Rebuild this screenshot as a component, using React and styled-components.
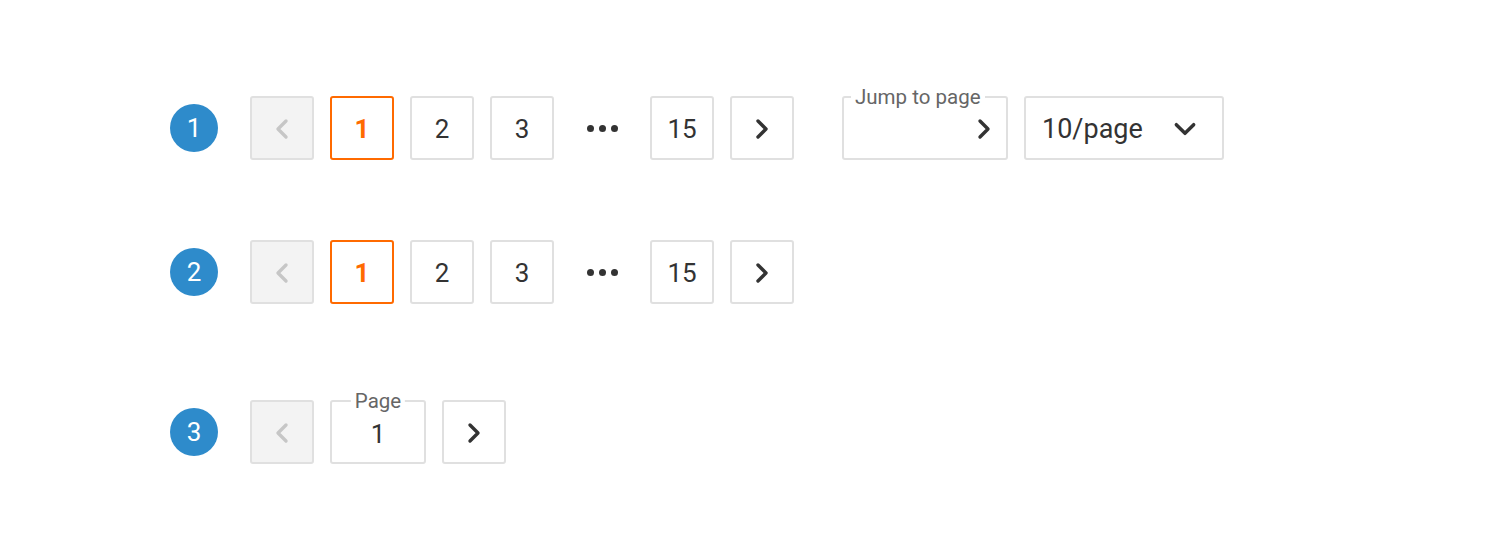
import styled, { createGlobalStyle } from 'styled-components'

const GlobalStyle = createGlobalStyle`
  body {
    margin: 0;
    background: #fff;
    font-family: Roboto, "Liberation Sans", sans-serif;
  }
`

function Chevron({ dir = 'right', disabled }) {
  const d = dir === 'right' ? 'M7 4 L15 12 L7 20' : 'M15 4 L7 12 L15 20'
  return (
    <svg width="24" height="24" viewBox="0 0 22 24" fill="none">
      <path d={d} stroke={disabled ? '#c6c6c6' : '#333'} strokeWidth="3.4" strokeLinecap="round" strokeLinejoin="round" />
    </svg>
  )
}

function ChevronDown() {
  return (
    <svg width="26" height="26" viewBox="0 0 24 24" fill="none">
      <path d="M4 8 L12 16 L20 8" stroke="#333" strokeWidth="3.2" strokeLinecap="round" strokeLinejoin="round" />
    </svg>
  )
}

function Pages() {
  return (
    <>
      <PageBtn active>1</PageBtn>
      <PageBtn>2</PageBtn>
      <PageBtn>3</PageBtn>
      <Ellipsis>
        <Dot />
        <Dot />
        <Dot />
      </Ellipsis>
      <PageBtn>15</PageBtn>
    </>
  )
}

export default function App() {
  return (
    <Page>
      <GlobalStyle />
      <Row>
        <Badge>1</Badge>
        <Controls>
          <PageBtn disabled><Chevron dir="left" disabled /></PageBtn>
          <Pages />
          <PageBtn><Chevron /></PageBtn>
          <Jump>
            <Label>Jump to page</Label>
            <Chevron />
          </Jump>
          <Select>
            10/page
            <ChevronDown />
          </Select>
        </Controls>
      </Row>
      <Row>
        <Badge>2</Badge>
        <Controls>
          <PageBtn disabled><Chevron dir="left" disabled /></PageBtn>
          <Pages />
          <PageBtn><Chevron /></PageBtn>
        </Controls>
      </Row>
      <Row spaced>
        <Badge>3</Badge>
        <Controls>
          <PageBtn disabled><Chevron dir="left" disabled /></PageBtn>
          <PageField>
            <Label centered>Page</Label>
            1
          </PageField>
          <PageBtn><Chevron /></PageBtn>
        </Controls>
      </Row>
    </Page>
  )
}

const Page = styled.div`
  width: 1504px;
  height: 544px;
  box-sizing: border-box;
  padding: 96px 0 0 170px;
  display: flex;
  flex-direction: column;
  gap: 80px;
`

const Row = styled.div`
  display: flex;
  align-items: center;
  gap: 32px;
  margin-top: ${p => (p.spaced ? '16px' : '0')};
`

const Badge = styled.div`
  width: 48px;
  height: 48px;
  border-radius: 50%;
  background: #2e8bcb;
  color: #fff;
  font-size: 26px;
  display: flex;
  align-items: center;
  justify-content: center;
`

const Controls = styled.div`
  display: flex;
  align-items: center;
  gap: 16px;
`

const Box = styled.div`
  box-sizing: border-box;
  height: 64px;
  border: 2px solid #e0e0e0;
  border-radius: 3px;
  background: #fff;
  color: #333;
  font-size: 26px;
  display: flex;
  align-items: center;
  position: relative;
  padding-top: 2px;
`

const PageBtn = styled(Box)`
  width: 64px;
  justify-content: center;
  border-color: ${p => (p.active ? '#ff6a00' : '#e0e0e0')};
  color: ${p => (p.active ? '#ff6a00' : '#333')};
  font-weight: ${p => (p.active ? 700 : 400)};
  background: ${p => (p.disabled ? '#f3f3f3' : '#fff')};
`

const Ellipsis = styled.div`
  width: 64px;
  height: 64px;
  display: flex;
  align-items: center;
  justify-content: center;
  gap: 5px;
`

const Dot = styled.span`
  width: 7px;
  height: 7px;
  border-radius: 50%;
  background: #333;
`

const Jump = styled(Box)`
  width: 166px;
  margin-left: 32px;
  justify-content: flex-end;
  padding-right: 10px;
`

const Select = styled(Box)`
  width: 200px;
  justify-content: space-between;
  padding: 2px 24px 0 16px;
  font-size: 27px;
`

const Label = styled.span`
  position: absolute;
  top: -11px;
  left: ${p => (p.centered ? '50%' : '7px')};
  transform: ${p => (p.centered ? 'translateX(-50%)' : 'none')};
  padding: 0 4px;
  background: #fff;
  color: #666;
  font-size: 20.5px;
  line-height: 20px;
`

const PageField = styled(Box)`
  width: 96px;
  justify-content: center;
  padding-top: 4px;
`
